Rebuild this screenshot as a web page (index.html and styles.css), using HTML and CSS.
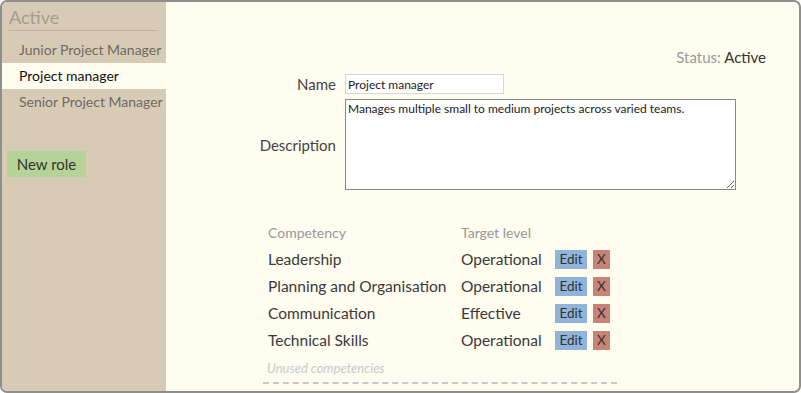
FILE: index.html
```html
<!DOCTYPE html>
<html lang="en">

<head>
    <meta charset="UTF-8">
    <title>Roles</title>
    <link rel="stylesheet" href="styles.css">
</head>

<body>
    <div class="frame">
        <div class="sidebar">
            <h2 class="group_title">Active</h2>
            <ul class="role_list">
                <li>Junior Project Manager</li>
                <li class="selected">Project manager</li>
                <li>Senior Project Manager</li>
            </ul>
            <button class="new_role">New role</button>
        </div>
        <div class="content">
            <div class="status"><span class="muted">Status:</span> Active</div>
            <div class="form_row name_row">
                <label class="form_label">Name</label>
                <input type="text" class="name_input" value="Project manager">
            </div>
            <div class="form_row">
                <label class="form_label">Description</label>
                <textarea class="desc_input">Manages multiple small to medium projects across varied teams.</textarea>
            </div>
            <table class="competencies">
                <thead>
                    <tr>
                        <th class="col_name">Competency</th>
                        <th class="col_level">Target level</th>
                        <th></th>
                    </tr>
                </thead>
                <tbody>
                    <tr>
                        <td>Leadership</td>
                        <td>Operational</td>
                        <td class="actions"><button class="btn_edit">Edit</button><button class="btn_remove">X</button></td>
                    </tr>
                    <tr>
                        <td>Planning and Organisation</td>
                        <td>Operational</td>
                        <td class="actions"><button class="btn_edit">Edit</button><button class="btn_remove">X</button></td>
                    </tr>
                    <tr>
                        <td>Communication</td>
                        <td>Effective</td>
                        <td class="actions"><button class="btn_edit">Edit</button><button class="btn_remove">X</button></td>
                    </tr>
                    <tr>
                        <td>Technical Skills</td>
                        <td>Operational</td>
                        <td class="actions"><button class="btn_edit">Edit</button><button class="btn_remove">X</button></td>
                    </tr>
                </tbody>
            </table>
            <div class="unused">Unused competencies</div>
        </div>
    </div>
</body>

</html>
```

FILE: styles.css
```css
* {
    box-sizing: border-box;
}

body {
    margin: 0px;
    padding: 0px;
    font-family: Lato, "Open Sans", sans-serif;
    color: #3a3a3a;
}

.frame {
    display: flex;
    height: 393px;
    border: 2px solid #8e8e8e;
    border-radius: 7px;
    overflow: hidden;
    background-color: #fffcf0;
}

.sidebar {
    width: 164px;
    flex-shrink: 0;
    background-color: #d8cbb5;
}

.group_title {
    margin: 0px 9px 6px 7px;
    height: 29px;
    padding-top: 4px;
    font-size: 18px;
    font-weight: normal;
    color: #a59c8c;
    border-bottom: 1px solid #bfb39d;
}

.role_list {
    list-style: none;
    margin: 0px;
    padding: 0px;
}

.role_list li {
    height: 26px;
    line-height: 26px;
    padding-left: 17px;
    font-size: 14px;
    color: #6e6a63;
    white-space: nowrap;
}

.role_list li.selected {
    background-color: #fffcf0;
    color: #111;
}

.new_role {
    margin: 36px 0px 0px 5px;
    width: 79px;
    height: 26px;
    border: none;
    background-color: #b5d397;
    font-family: inherit;
    font-size: 15px;
    color: #333;
}

.content {
    flex-grow: 1;
    padding-top: 46px;
}

.status {
    text-align: right;
    padding-right: 33px;
    font-size: 15px;
    height: 23px;
    color: #333;
}

.muted {
    color: #999;
}

.form_row {
    display: flex;
    align-items: center;
    margin-bottom: 5px;
}

.name_row {
    margin-top: 3px;
}

.form_label {
    width: 179px;
    padding-right: 9px;
    text-align: right;
    font-size: 15px;
    color: #444;
}

.name_input {
    width: 159px;
    height: 20px;
    border: 1px solid #d6d6d6;
    background-color: #fff;
    font-family: inherit;
    font-size: 12px;
    padding: 0px 2px;
    color: #222;
}

.desc_input {
    width: 391px;
    height: 91px;
    border: 1px solid #888;
    background-color: #fff;
    font-family: inherit;
    font-size: 12px;
    padding: 1px 2px;
    color: #222;
    resize: both;
}

.competencies {
    margin: 29px 0px 0px 100px;
    border-collapse: collapse;
}

.competencies th {
    text-align: left;
    font-weight: normal;
    font-size: 14px;
    color: #999;
    height: 26px;
    padding: 0px 2px;
}

.competencies th.col_name {
    width: 193px;
}

.competencies th.col_level {
    width: 94px;
}

.competencies td {
    height: 27px;
    padding: 0px 2px;
    font-size: 15.5px;
    color: #3a3a3a;
    white-space: nowrap;
}

.competencies td.actions {
    padding-left: 2px;
}

.btn_edit,
.btn_remove {
    height: 19px;
    border: none;
    font-family: inherit;
    font-size: 13.5px;
    color: #333;
    padding: 0px;
    vertical-align: middle;
}

.btn_edit {
    width: 32px;
    background-color: #8fb3d9;
    margin-right: 6px;
}

.btn_remove {
    width: 17px;
    background-color: #c98276;
}

.unused {
    margin: 7px 0px 0px 97px;
    width: 354px;
    padding: 0px 0px 6px 4px;
    font-size: 13px;
    font-style: italic;
    color: #c9c9c9;
    border-bottom: 2px dashed #c9c9c9;
}
```
